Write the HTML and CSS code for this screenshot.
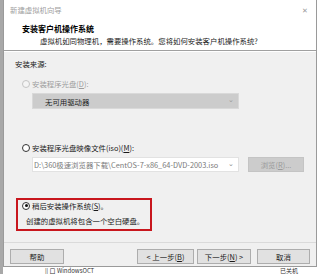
FILE: index.html
```html
<!DOCTYPE html>
<html lang="zh-CN">
<head>
  <meta charset="UTF-8">
  <title>新建虚拟机向导</title>
  <link rel="stylesheet" href="styles.css">
</head>
<body>
  <div class="desk">
    <div class="dialog">
      <!-- Title bar -->
      <div class="titlebar">
        <span class="title">新建虚拟机向导</span>
        <span class="close">&#x2715;</span>
      </div>

      <!-- Wizard header -->
      <div class="header">
        <h1>安装客户机操作系统</h1>
        <p>虚拟机如同物理机，需要操作系统。您将如何安装客户机操作系统?</p>
      </div>

      <!-- Install source -->
      <div class="content">
        <div class="source">安装来源:</div>

        <div class="option disabled opt-cd">
          <span class="radio"></span>安装程序光盘(<u>D</u>):
        </div>
        <div class="select select-cd">
          <span>无可用驱动器</span>
          <span class="arrow">&#x2304;</span>
        </div>

        <div class="option opt-iso">
          <span class="radio"></span>安装程序光盘映像文件(iso)(<u>M</u>):
        </div>
        <div class="iso-row">
          <div class="select select-iso">
            <span>D:\360极速浏览器下载\CentOS-7-x86_64-DVD-2003.iso</span>
            <span class="arrow">&#x2304;</span>
          </div>
          <button class="browse" disabled>浏览(<u>R</u>)...</button>
        </div>

        <div class="later">
          <div class="option">
            <span class="radio checked"></span>稍后安装操作系统(<u>S</u>)。
          </div>
          <div class="hint">创建的虚拟机将包含一个空白硬盘。</div>
        </div>
      </div>

      <!-- Buttons -->
      <div class="footer">
        <button class="btn btn-help">帮助</button>
        <div class="spacer"></div>
        <button class="btn btn-back">&lt; 上一步(<u>B</u>)</button>
        <button class="btn btn-next">下一步(<u>N</u>) &gt;</button>
        <button class="btn btn-cancel">取消</button>
      </div>
    </div>

    <div class="behind">
      <span class="vm">|| 口 WindowsOCT</span>
      <span class="state">已关机</span>
    </div>
  </div>
</body>
</html>
```

FILE: styles.css
```css
body {
  margin: 0;
  padding: 0;
  font-family: "Noto Sans CJK SC", "Noto Sans", sans-serif;
  font-size: 7.4px;
  color: #1a1a1a;
  background-color: #ffffff;
}

u {
  text-decoration: underline;
}

.desk {
  width: 320px;
  height: 274px;
  overflow: hidden;
  background-color: #ffffff;
  border-left: 3px solid #a8a8a8;
  box-sizing: border-box;
}

.dialog {
  width: 314px;
  height: 267px;
  box-sizing: border-box;
  border: 1px solid #9a9a9a;
  border-top: none;
  background-color: #f0f0f0;
  display: flex;
  flex-direction: column;
}

/* Title bar */
.titlebar {
  height: 21px;
  background-color: #ffffff;
  display: flex;
  align-items: center;
  justify-content: space-between;
  padding: 0 8px 0 6px;
}

.title {
  color: #a0a0a0;
  line-height: 10px;
  margin-top: -2px;
}

.close {
  color: #9a9a9a;
  font-size: 7px;
  margin-top: -2px;
}

/* Header */
.header {
  background-color: #ffffff;
  height: 29px;
  padding-left: 18px;
  border-bottom: 1px solid #a0a0a0;
  box-shadow: 0 1px 0 #ffffff;
}

.header h1 {
  margin: 3px 0 0 0;
  font-size: 8px;
  line-height: 10px;
  font-weight: bold;
  color: #000000;
}

.header p {
  margin: 2px 0 0 18px;
  line-height: 10px;
  color: #222222;
}

/* Content */
.content {
  flex: 1;
  padding-left: 11px;
}

.source {
  margin-top: 8px;
  line-height: 10px;
}

.option {
  display: flex;
  align-items: center;
  line-height: 10px;
  margin-left: 7px;
}

.option.disabled {
  color: #9d9d9d;
}

.opt-cd {
  margin-top: 10px;
}

.opt-iso {
  margin-top: 34px;
}

.radio {
  width: 6px;
  height: 6px;
  border: 1px solid #333333;
  border-radius: 50%;
  background-color: #ffffff;
  margin-right: 2px;
  position: relative;
  flex-shrink: 0;
}

.disabled .radio {
  border-color: #c4c4c4;
  background-color: #f4f4f4;
}

.radio.checked::after {
  content: "";
  position: absolute;
  left: 1.5px;
  top: 1.5px;
  width: 3px;
  height: 3px;
  border-radius: 50%;
  background-color: #111111;
}

.select {
  margin-left: 17px;
  width: 207px;
  box-sizing: border-box;
  display: flex;
  align-items: center;
  justify-content: space-between;
  padding: 0 4px 0 12px;
}

.select-cd {
  margin-top: 4px;
  height: 16px;
  background-color: #cccccc;
  border: 1px solid #d9d9d9;
  color: #1a1a1a;
}

.select-cd .arrow {
  color: #9a9a9a;
}

.select-iso {
  height: 15px;
  background-color: #ffffff;
  border: 1px solid #e2e2e2;
  color: #7a7a7a;
  padding-left: 1px;
  white-space: nowrap;
  overflow: hidden;
}

.arrow {
  font-size: 7px;
  line-height: 7px;
  color: #8a8a8a;
  margin-top: -3px;
}

.iso-row {
  display: flex;
  margin-top: 4px;
}

.browse {
  margin-left: 9px;
  width: 56px;
  height: 15px;
  padding: 0;
  font-family: inherit;
  font-size: 7.4px;
  background-color: #cccccc;
  border: 1px solid #c4c4c4;
  color: #9a9a9a;
}

.later {
  margin-top: 26px;
  margin-left: 1px;
  width: 136px;
  height: 33px;
  box-sizing: border-box;
  border: 2px solid #c8161d;
  padding-top: 1px;
}

.later .option {
  margin-left: 4px;
  line-height: 9px;
}

.hint {
  margin: 6px 0 0 8px;
  line-height: 10px;
}

/* Footer */
.footer {
  height: 24px;
  box-sizing: border-box;
  border-top: 1px solid #dadada;
  display: flex;
  align-items: flex-start;
  padding: 6px 6px 0 6px;
}

.spacer {
  flex: 1;
}

.btn {
  height: 15px;
  padding: 0;
  font-family: inherit;
  font-size: 7.4px;
  color: #1a1a1a;
  background-color: #e1e1e1;
  border: 1px solid #adadad;
}

.btn-help {
  width: 54px;
}

.btn-back {
  width: 57px;
}

.btn-next {
  width: 54px;
  margin-left: 3px;
}

.btn-cancel {
  width: 53px;
  margin-left: 6px;
}

/* Window behind the dialog */
.behind {
  display: flex;
  height: 7px;
  font-size: 6px;
  line-height: 7px;
  color: #333333;
  padding-left: 42px;
}

.state {
  margin-left: auto;
  margin-right: 22px;
}
```
